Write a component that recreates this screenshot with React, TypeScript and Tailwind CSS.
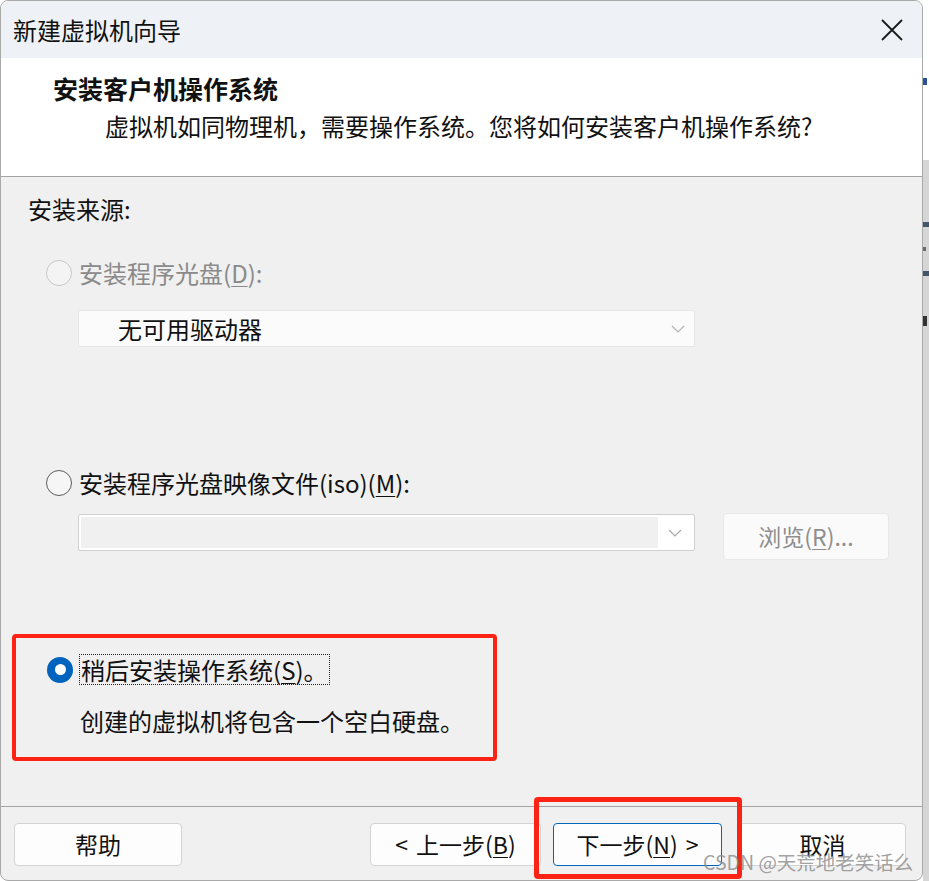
import type { ReactNode } from "react";

const U = ({ children }: { children: ReactNode }) => (
  <span className="underline decoration-1 underline-offset-[3px]">{children}</span>
);

const Chevron = ({ color = "#a8a8a8" }: { color?: string }) => (
  <svg width="14" height="8" viewBox="0 0 14 8" fill="none">
    <path d="M1 1l6 6 6-6" stroke={color} strokeWidth="1.2" />
  </svg>
);

const Radio = ({ state }: { state: "disabled" | "off" | "on" }) => {
  if (state === "on") {
    return (
      <div className="flex h-[26px] w-[26px] shrink-0 items-center justify-center rounded-full bg-[#0063bd]">
        <div className="h-[11px] w-[11px] rounded-full bg-white" />
      </div>
    );
  }
  return (
    <div
      className={
        state === "disabled"
          ? "h-[26px] w-[26px] shrink-0 rounded-full border-[1.5px] border-[#c7c7c7] bg-[#f4f4f4]"
          : "h-[26px] w-[26px] shrink-0 rounded-full border-[1.5px] border-[#5c5c5c] bg-[#f6f6f6]"
      }
    />
  );
};

const FooterButton = ({
  children,
  primary,
  className,
}: {
  children: ReactNode;
  primary?: boolean;
  className?: string;
}) => (
  <button
    className={`flex h-[43px] items-center justify-center rounded-[4px] border bg-[#fdfdfd] text-[23px] leading-none text-[#111] ${
      primary ? "border-[#0067c0]" : "border-[#d3d3d3]"
    } ${className ?? ""}`}
  >
    {children}
  </button>
);

const App = () => {
  return (
    <div className="flex h-[881px] w-[929px] bg-white font-['Noto_Sans_CJK_SC',sans-serif] text-[#111]">
      <div className="relative flex h-full w-[923px] flex-col overflow-hidden rounded-[8px] border border-[#a9a9a9] bg-[#f0f0f0]">
        {/* title bar */}
        <div className="flex h-[57px] shrink-0 items-center justify-between bg-[#eef2f7] pl-[12px] pr-[19px]">
          <span className="text-[24px] leading-none">新建虚拟机向导</span>
          <svg width="22" height="22" viewBox="0 0 22 22">
            <path d="M1 1l20 20M21 1L1 21" stroke="#1a1a1a" strokeWidth="1.8" />
          </svg>
        </div>

        {/* header */}
        <div className="flex h-[119px] shrink-0 flex-col border-b border-[#a3a3a3] bg-white pl-[52px] pt-[15px]">
          <div className="text-[25px] font-bold leading-[30px]">安装客户机操作系统</div>
          <div className="mt-[8px] pl-[52px] text-[24px] leading-[30px]">
            虚拟机如同物理机，需要操作系统。您将如何安装客户机操作系统?
          </div>
        </div>

        {/* body */}
        <div className="flex flex-1 flex-col pl-[27px] pt-[17px] text-[24px]">
          <div className="leading-[30px]">安装来源:</div>

          <div className="mt-[34px] flex h-[30px] items-center gap-[7px] pl-[18px] text-[#8a8a8a]">
            <Radio state="disabled" />
            <span>
              安装程序光盘(<U>D</U>):
            </span>
          </div>

          <div className="ml-[50px] mt-[22px] flex h-[37px] w-[617px] items-center justify-between rounded-[2px] border border-[#e6e6e6] bg-[#fbfbfb] pl-[39px] pr-[9px]">
            <span className="leading-none">无可用驱动器</span>
            <Chevron color="#b5b5b5" />
          </div>

          <div className="mt-[121px] flex h-[30px] items-center gap-[7px] pl-[18px]">
            <Radio state="off" />
            <span>
              安装程序光盘映像文件(iso)(<U>M</U>):
            </span>
          </div>

          <div className="ml-[50px] mt-[16px] flex items-start gap-[28px]">
            <div className="flex h-[37px] w-[617px] items-center rounded-[2px] border border-[#cfcfcf] bg-white p-[2px]">
              <div className="h-full w-[577px] bg-[#f0f0f0]" />
              <div className="flex flex-1 items-center justify-center">
                <Chevron color="#a8a8a8" />
              </div>
            </div>
            <div className="-mt-[1px] flex h-[47px] w-[166px] items-center justify-center rounded-[4px] border border-[#e8e8e8] bg-[#fafafa] text-[23px] text-[#8e8e8e]">
              浏览(<U>R</U>)...
            </div>
          </div>

          {/* annotated option */}
          <div className="-ml-[16px] mt-[74px] flex h-[127px] w-[485px] flex-col rounded-[4px] border-[4px] border-[#fc2214] pl-[31px] pt-[16px]">
            <div className="flex h-[31px] items-center gap-[6px]">
              <Radio state="on" />
              <span className="flex h-[31px] items-center border border-dotted border-[#222] px-[1px] leading-none">
                稍后安装操作系统(<U>S</U>)。
              </span>
            </div>
            <div className="mt-[21px] pl-[33px] leading-[30px]">创建的虚拟机将包含一个空白硬盘。</div>
          </div>
        </div>

        {/* footer */}
        <div className="flex h-[74px] shrink-0 items-start border-t border-[#a3a3a3] pl-[13px] pr-[16px] pt-[16px]">
          <FooterButton className="w-[168px]">帮助</FooterButton>
          <div className="flex-1" />
          <FooterButton className="w-[171px] gap-[8px]">
            <span>&lt;</span>
            <span>
              上一步(<U>B</U>)
            </span>
          </FooterButton>
          <FooterButton primary className="ml-[12px] w-[169px] gap-[8px]">
            <span>
              下一步(<U>N</U>)
            </span>
            <span>&gt;</span>
          </FooterButton>
          <FooterButton className="ml-[17px] w-[167px]">取消</FooterButton>
        </div>

        {/* annotation around next button */}
        <div className="absolute left-[533px] top-[796px] h-[82px] w-[208px] rounded-[4px] border-[5px] border-[#fc2214]" />

        {/* watermark */}
        <div className="absolute left-[702px] top-[848px] text-[19.5px] leading-[26px] text-[#8a8a8a]/80">
          CSDN @天荒地老笑话么
        </div>
      </div>

      {/* sliver of the window behind */}
      <div className="flex h-full w-[6px] flex-col">
        <div className="flex h-[160px] flex-col bg-white pt-[78px]">
          <div className="h-[7px] w-[4px] bg-[#2a4f9c]" />
        </div>
        <div className="flex flex-1 flex-col gap-[20px] bg-[#d6d6d6] pt-[62px]">
          <div className="h-[5px] bg-[#44546a]" />
          <div className="h-[4px] w-[3px] bg-[#6a6a6a]" />
          <div className="h-[5px] bg-[#44546a]" />
          <div className="mt-[20px] h-[10px] w-[4px] bg-[#333]" />
        </div>
      </div>
    </div>
  );
};

export default App;
